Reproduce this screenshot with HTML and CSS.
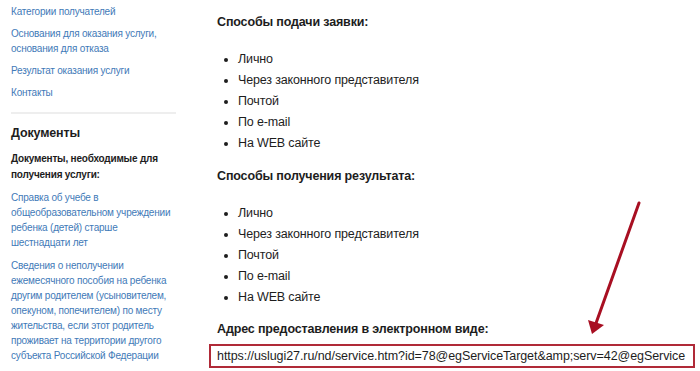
FILE: index.html
```html
<!DOCTYPE html>
<html lang="ru">
<head>
<meta charset="utf-8">
<title>Услуга</title>
<link rel="stylesheet" href="styles.css">
</head>
<body>
<div class="page">
  <aside class="sidebar">
    <nav class="nav">
      <a class="nav-link" href="#">Категории получателей</a>
      <a class="nav-link" href="#">Основания для оказания услуги, основания для отказа</a>
      <a class="nav-link" href="#">Результат оказания услуги</a>
      <a class="nav-link" href="#">Контакты</a>
    </nav>
    <hr class="divider">
    <h2 class="side-title">Документы</h2>
    <h3 class="side-sub">Документы, необходимые для получения услуги:</h3>
    <div class="docs">
      <a class="doc-link" href="#">Справка об учебе в общеобразовательном учреждении ребенка (детей) старше шестнадцати лет</a>
      <a class="doc-link" href="#">Сведения о неполучении ежемесячного пособия на ребенка другим родителем (усыновителем, опекуном, попечителем) по месту жительства, если этот родитель проживает на территории другого субъекта Российской Федерации</a>
    </div>
  </aside>
  <main class="main">
    <h3 class="sect-title">Способы подачи заявки:</h3>
    <ul class="list">
      <li>Лично</li>
      <li>Через законного представителя</li>
      <li>Почтой</li>
      <li>По e-mail</li>
      <li>На WEB сайте</li>
    </ul>
    <h3 class="sect-title">Способы получения результата:</h3>
    <ul class="list">
      <li>Лично</li>
      <li>Через законного представителя</li>
      <li>Почтой</li>
      <li>По e-mail</li>
      <li>На WEB сайте</li>
    </ul>
    <h3 class="sect-title sect-last">Адрес предоставления в электронном виде:</h3>
    <div class="url-box">https://uslugi27.ru/nd/service.htm?id=78@egServiceTarget&amp;amp;serv=42@egService</div>
  </main>
</div>
<svg class="arrow" width="700" height="371" viewBox="0 0 700 371" aria-hidden="true">
  <line x1="639" y1="203" x2="595" y2="326" stroke="#a80f22" stroke-width="3" stroke-linecap="round"/>
  <polygon points="592,334 588,320 604,325" fill="#a80f22"/>
</svg>
</body>
</html>
```
FILE: styles.css
```css
html, body {
  margin: 0;
  padding: 0;
  background: #ffffff;
}
body {
  font-family: "Liberation Sans", Arial, sans-serif;
  color: #1d1d1d;
  position: relative;
  width: 700px;
  height: 371px;
  overflow: hidden;
}
.page {
  display: flex;
  align-items: flex-start;
}
.sidebar {
  width: 165px;
  padding: 3.5px 0 0 11px;
  flex-shrink: 0;
  font-size: 10px;
  letter-spacing: -0.2px;
}
.nav {
  display: flex;
  flex-direction: column;
  gap: 7px;
}
.nav-link, .doc-link {
  color: #3f7ab8;
  text-decoration: none;
  line-height: 15px;
  display: block;
}
.divider {
  border: none;
  height: 2px;
  background: #eeeeee;
  margin: 12.5px 0 11px 0;
}
.side-title {
  font-size: 12.5px;
  letter-spacing: -0.15px;
  font-weight: bold;
  line-height: 16px;
  margin: 0 0 10px 0;
  color: #1d1d1d;
}
.side-sub {
  font-size: 10px;
  font-weight: bold;
  line-height: 16px;
  margin: 0 0 6.5px 0;
  color: #1d1d1d;
}
.docs {
  display: flex;
  flex-direction: column;
  gap: 8px;
}
.main {
  margin-left: 41px;
  padding-top: 14px;
  font-size: 12.5px;
  letter-spacing: -0.15px;
}
.sect-title {
  font-size: 12.5px;
  font-weight: bold;
  line-height: 16px;
  margin: 0 0 19px 0;
}
.list {
  margin: 0 0 14px 0;
  padding-left: 21px;
  line-height: 21px;
}
.list + .sect-title.sect-last {
  margin-top: -1px;
}
.sect-last {
  margin-bottom: 7px;
}
.url-box {
  margin-left: -8px;
  width: 470px;
  height: 20px;
  line-height: 20px;
  padding: 0 6px;
  border: 2px solid #b02a38;
  white-space: nowrap;
  letter-spacing: -0.07px;
  color: #1d1d1d;
}
.arrow {
  position: absolute;
  left: 0;
  top: 0;
  pointer-events: none;
}
```
